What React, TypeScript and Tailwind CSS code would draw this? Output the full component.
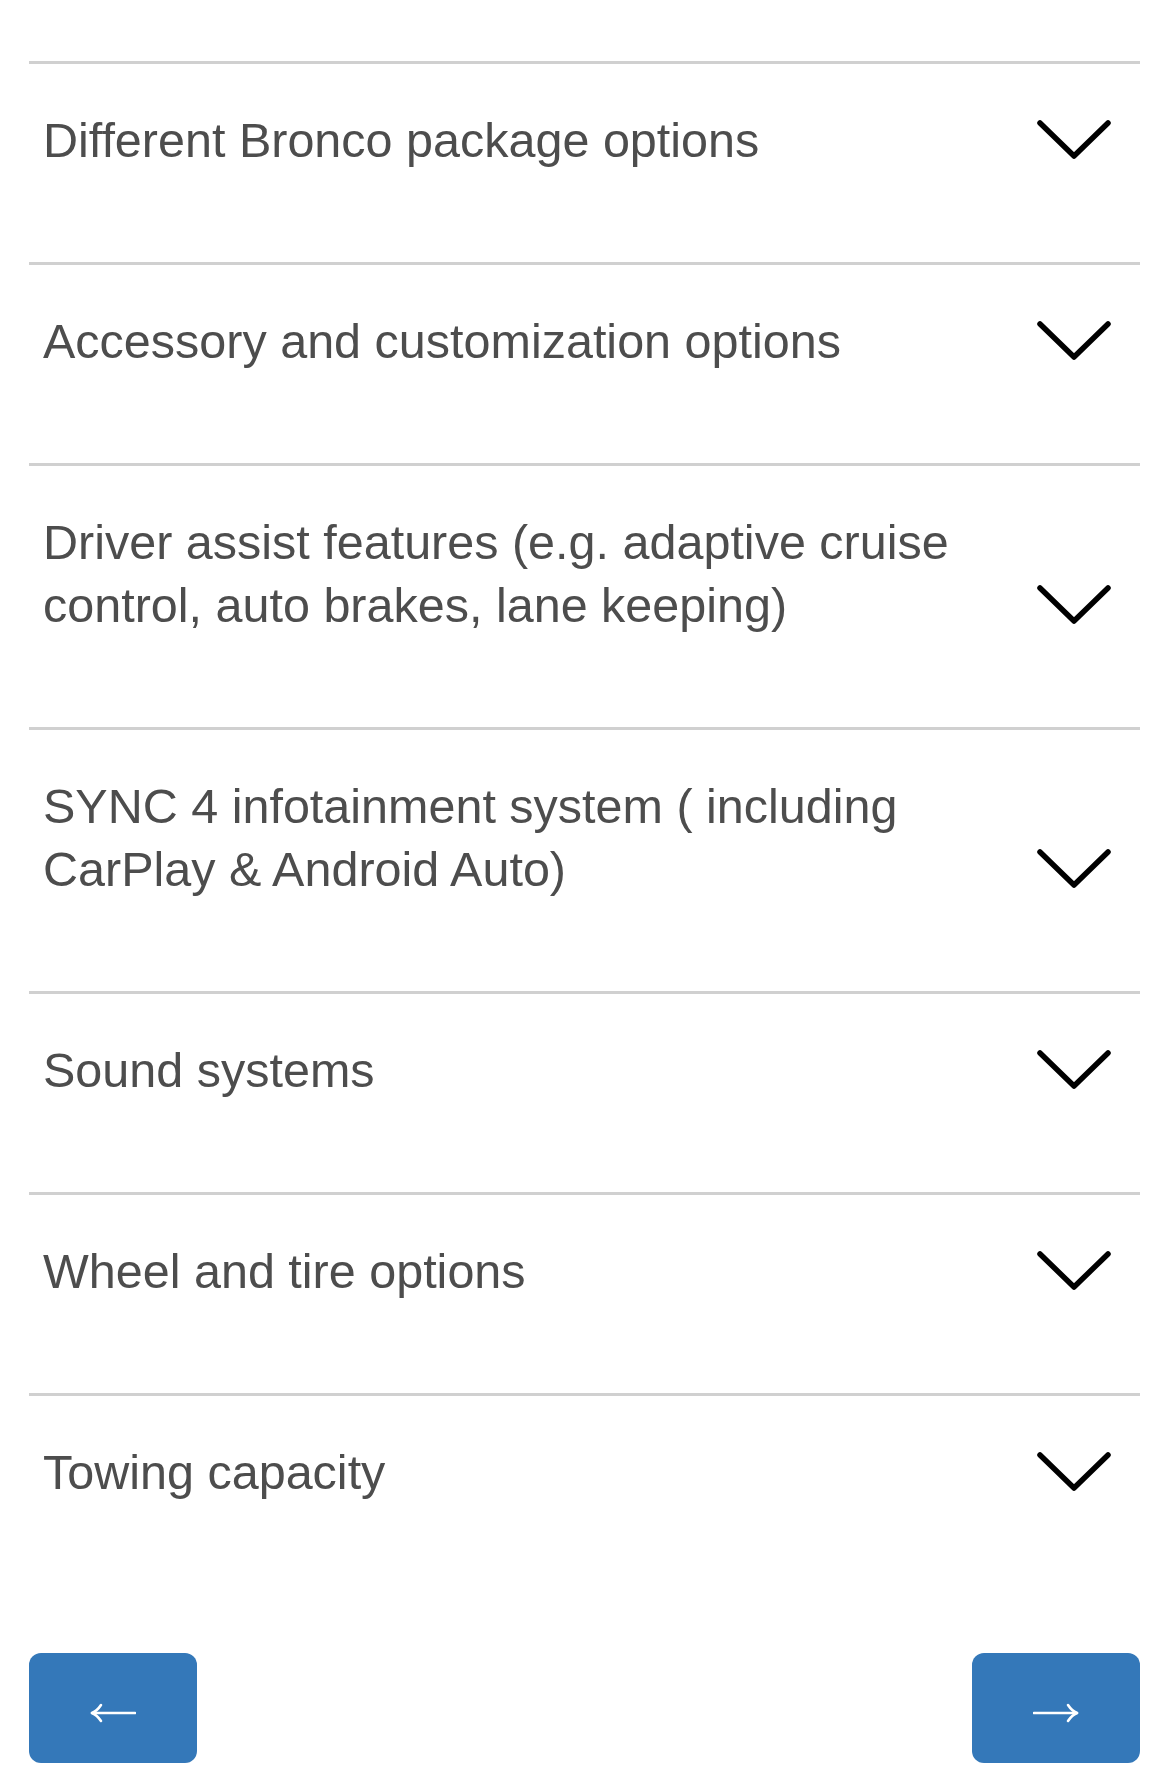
import React from "react";

const items: string[][] = [
  ["Different Bronco package options"],
  ["Accessory and customization options"],
  ["Driver assist features (e.g. adaptive cruise", "control, auto brakes, lane keeping)"],
  ["SYNC 4 infotainment system ( including", "CarPlay & Android Auto)"],
  ["Sound systems"],
  ["Wheel and tire options"],
  ["Towing capacity"],
];

function Chevron() {
  return (
    <svg width="76" height="42" viewBox="0 0 76 42" className="shrink-0 mr-[28px] mb-[11px]">
      <polyline
        points="4,4 38,37 72,4"
        fill="none"
        stroke="#000"
        strokeWidth="5.5"
        strokeLinecap="round"
        strokeLinejoin="round"
      />
    </svg>
  );
}

function Arrow({ dir }: { dir: "left" | "right" }) {
  return (
    <svg width="46" height="20" viewBox="0 0 46 20" className="mt-[10px]">
      {dir === "left" ? (
        <g fill="none" stroke="#fff" strokeWidth="2.6" strokeLinecap="round" strokeLinejoin="round">
          <line x1="2" y1="10" x2="45" y2="10" />
          <path d="M11 2 Q7 8 2 10 Q7 12 11 18" />
        </g>
      ) : (
        <g fill="none" stroke="#fff" strokeWidth="2.6" strokeLinecap="round" strokeLinejoin="round">
          <line x1="1" y1="10" x2="44" y2="10" />
          <path d="M35 2 Q39 8 44 10 Q39 12 35 18" />
        </g>
      )}
    </svg>
  );
}

export default function App() {
  return (
    <div
      className="w-[1169px] h-[1787px] bg-white px-[29px] pt-[61px]"
      style={{ fontFamily: '"Liberation Sans", Arial, Helvetica, sans-serif' }}
    >
      <div className="flex flex-col">
        {items.map((lines, i) => (
          <div
            key={i}
            className="flex items-end border-t-[3px] border-[#d0d0d0] pt-[45px] pb-[90px] pl-[14px]"
          >
            <div className="flex-1 text-[48.5px] leading-[63px] text-[#4d4d4d]">
              {lines.map((l, j) => (
                <div key={j}>{l}</div>
              ))}
            </div>
            <Chevron />
          </div>
        ))}
      </div>
      <div className="flex justify-between mt-[59px]">
        <button className="w-[168px] h-[110px] rounded-[12px] bg-[#3478b9] flex items-center justify-center">
          <Arrow dir="left" />
        </button>
        <button className="w-[168px] h-[110px] rounded-[12px] bg-[#3478b9] flex items-center justify-center">
          <Arrow dir="right" />
        </button>
      </div>
    </div>
  );
}
